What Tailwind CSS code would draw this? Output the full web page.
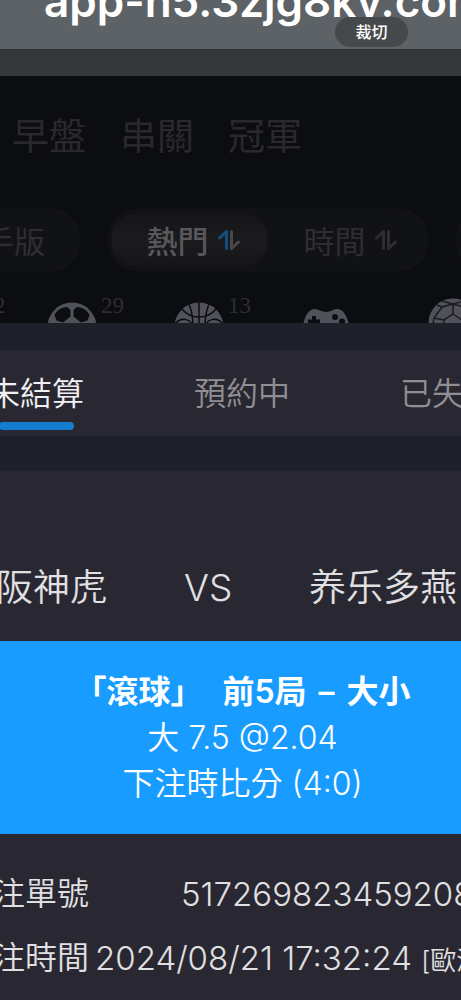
<!DOCTYPE html>
<html lang="zh-Hant">
<head>
    <meta charset="UTF-8">
    <meta name="viewport" content="width=device-width, initial-scale=1.0">
    <title>未結算</title>
    <script src="https://cdn.jsdelivr.net/npm/@tailwindcss/browser@4"></script>
</head>
<body class="min-h-screen overflow-x-hidden bg-[#292832] font-['Inter','Noto_Sans_CJK_TC',sans-serif] font-[350] text-[#e0e0e2]">
    <!-- Address bar -->
    <header class="relative h-[49px] overflow-hidden bg-[#5d6266]">
        <p class="-mt-[26px] pl-11 text-[44px] leading-[54px] font-semibold whitespace-nowrap text-white">app-h5.3zjg8ky.com</p>
        <button class="absolute top-[17px] left-[335px] h-[30px] w-[73px] rounded-full bg-[#45494b] text-base leading-none font-medium text-white">裁切</button>
    </header>
    <div class="h-[27px] bg-[#333739]"></div>

    <!-- Dimmed page behind the sheet -->
    <section class="h-[247px] overflow-hidden bg-[#0c0d11]">
        <nav class="flex gap-[34px] pt-[34px] pl-3 text-[37px] leading-[54px] font-normal text-[#29292b]">
            <a href="#">早盤</a>
            <a href="#">串關</a>
            <a href="#">冠軍</a>
        </nav>

        <div class="mt-11 -ml-20 flex gap-[26px] text-[31px] font-normal whitespace-nowrap text-[#2e2e30]">
            <button class="flex h-16 w-[161px] shrink-0 items-center justify-end rounded-full bg-[#111216] pt-1 pr-9">新手版</button>
            <div class="flex h-16 w-[322px] shrink-0 items-center rounded-full bg-[#111216] px-1">
                <button class="flex h-[54px] w-[157px] items-center justify-center gap-2 rounded-full bg-linear-to-b from-[#141518] via-[#1b1b1e] to-[#141518] pt-1 pl-2 font-medium text-[#58585a]">
                    熱門
                    <svg class="mb-1 h-6 w-6" viewBox="0 0 24 24" fill="none" stroke-width="3" stroke-linecap="round" stroke-linejoin="round">
                        <path d="M2.500 10 9.500 3.500V20.500" stroke="#12507f"/>
                        <path d="M14.500 3.500V20.500L21.500 14" stroke="#48484a"/>
                    </svg>
                </button>
                <button class="flex h-[54px] w-[157px] items-center justify-center gap-2 pt-1 pl-2">
                    時間
                    <svg class="mb-1 h-6 w-6" viewBox="0 0 24 24" fill="none" stroke="#2e2e30" stroke-width="3" stroke-linecap="round" stroke-linejoin="round">
                        <path d="M2.500 10 9.500 3.500V20.500M14.500 3.500V20.500L21.500 14"/>
                    </svg>
                </button>
            </div>
            <div class="h-16 w-20 shrink-0 rounded-full bg-[#111216]"></div>
        </div>

        <!-- Sports -->
        <div class="-ml-20 flex pt-6 font-['Liberation_Serif',serif] text-[23px] leading-5 text-[#2e2f33]">
            <div class="flex w-[127px] shrink-0 gap-1 pl-[74px]">2</div>
            <div class="flex w-[127px] shrink-0 gap-1">
                <svg class="mt-1.5 h-[50px] w-[50px]" viewBox="0 0 50 50">
                    <circle cx="25" cy="25" r="24.500" fill="#50515b"/>
                    <g fill="#0c0d11">
                        <path d="M7.500 13C10 8 15 5 20 5L23.500 8V14.500L16 20.500L9.500 18.500Z"/>
                        <path d="M42.500 13C40 8 35 5 30 5L26.500 8V14.500L34 20.500L40.500 18.500Z"/>
                        <path d="M25 23 33 28 30 36H20L17 28Z"/>
                        <path d="M3 21 11 26 14 34 7 37ZM47 21 39 26 36 34 43 37ZM18 39H32L35 45 25 48 15 45Z"/>
                    </g>
                </svg>
                <span>29</span>
            </div>
            <div class="flex w-[127px] shrink-0 gap-1">
                <svg class="mt-1.5 h-[50px] w-[50px]" viewBox="0 0 50 50">
                    <circle cx="25" cy="25" r="24.500" fill="#50515b"/>
                    <path d="M25 0V50M14 0C17 6 19 12 19 25S17 44 14 50M36 0C33 6 31 12 31 25S33 44 36 50M8 7C12 12 18 15 25 15S38 12 42 7M0 23C7 14 19 16 19 28M50 23C43 14 31 16 31 28" fill="none" stroke="#0c0d11" stroke-width="1.500"/>
                </svg>
                <span>13</span>
            </div>
            <div class="flex w-[127px] shrink-0 gap-1">
                <svg class="mt-1.5 h-[50px] w-[50px]" viewBox="0 0 50 50">
                    <path d="M14 7C18 7 20 10 25 10S32 7 36 7C46 7 49 24 49 34C49 43 41 43 37 36L34 32H16L13 36C9 43 1 43 1 34C1 24 4 7 14 7Z" fill="#50515b"/>
                    <path d="M13 14V25M7 19.500H19" stroke="#0c0d11" stroke-width="4"/>
                    <g fill="#0c0d11">
                        <circle cx="34" cy="15" r="3"/>
                        <circle cx="41" cy="19.500" r="3"/>
                        <circle cx="34" cy="24" r="3"/>
                    </g>
                </svg>
            </div>
            <svg class="mt-0.5 h-[50px] w-[50px] shrink-0" viewBox="0 0 50 50">
                <circle cx="25" cy="25" r="24.500" fill="#50515b"/>
                <path d="M25 16 34 22V32L25 37 16 32V22ZM25 16V6M16 22 6 20M34 22 44 20M16 32 8 38M34 32 42 38M14 3 25 6 36 3M25 6 14 9 6 20 4 30M14 9 9 7M25 6 36 9 44 20 46 30" fill="none" stroke="#1a1b20" stroke-width="1.500"/>
            </svg>
        </div>
    </section>

    <!-- Bet list tabs -->
    <div class="bg-[#1e2129] pt-[27px] pb-[35px]">
        <div class="-ml-[67px] flex h-[86px] bg-[#292832] text-[32px] leading-[48px] whitespace-nowrap text-[#8f8f93]">
            <button class="flex w-[206px] shrink-0 flex-col items-center pt-5 text-[#f0f0f2]">
                未結算
                <span class="mt-1 h-2 w-[75px] rounded-full bg-[#147dd0]"></span>
            </button>
            <button class="flex w-[206px] shrink-0 flex-col items-center pt-5">預約中</button>
            <button class="flex w-[206px] shrink-0 flex-col items-center pt-5">已失效</button>
        </div>
    </div>

    <main class="overflow-hidden whitespace-nowrap">
        <h2 class="-ml-[41px] flex items-center pt-[90px] pb-[26px] text-[37px] leading-[54px]">
            <span class="w-[225px] shrink-0">大阪神虎</span>
            <span class="w-[125px] shrink-0">VS</span>
            <span lang="zh-Hans" class="font-['Inter','Noto_Sans_CJK_SC',sans-serif]">养乐多燕</span>
        </h2>

        <div class="h-[193px] bg-[#189cff] pt-7 pl-6 text-center text-[32px] leading-[46px] text-white">
            <p class="flex justify-center gap-3 font-semibold">
                <span class="mr-2">「滾球」</span>
                <span>前5局</span>
                <span>–</span>
                <span>大小</span>
            </p>
            <p>大 7.5 @2.04</p>
            <p>下注時比分 (4:0)</p>
        </div>

        <dl class="-ml-[39px] pt-7 text-[32px] leading-[64px]">
            <div class="flex">
                <dt class="w-[220px] shrink-0">下注單號</dt>
                <dd class="text-[33px]">5172698234592081</dd>
            </div>
            <div class="flex">
                <dt class="w-[134px] shrink-0">下注時間</dt>
                <dd class="text-[33px]">2024/08/21 17:32:24 <span class="text-[26px]">[歐洲盤]</span></dd>
            </div>
        </dl>
    </main>
</body>
</html>
